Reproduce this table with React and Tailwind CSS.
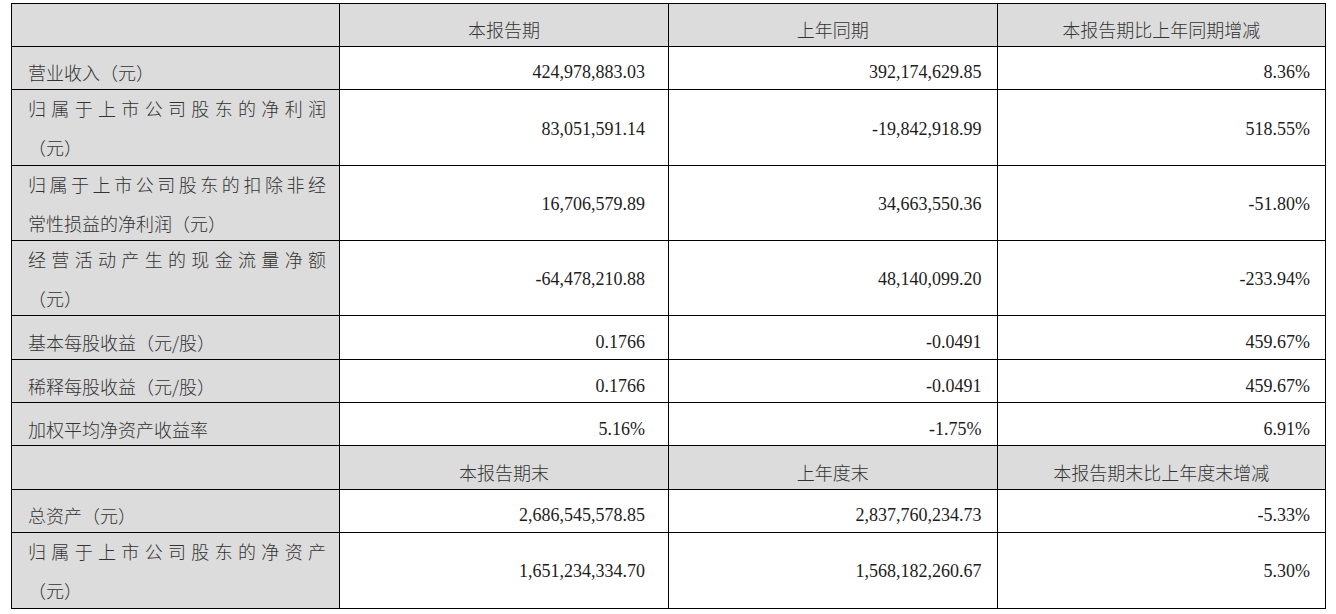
import React from "react";

const cjk = { fontFamily: '"Noto Sans CJK SC", "Liberation Sans", sans-serif' };
const num = { fontFamily: '"Liberation Serif", "Noto Sans CJK SC", serif' };

const rows = [
  { type: "head", h: "h-[42.6px]", cols: ["本报告期", "上年同期", "本报告期比上年同期增减"] },
  { type: "one", h: "h-[43.4px]", label: "营业收入（元）", v: ["424,978,883.03", "392,174,629.85", "8.36%"] },
  { type: "two", h: "h-[76.3px]", l1: "归属于上市公司股东的净利润", l2: "（元）", v: ["83,051,591.14", "-19,842,918.99", "518.55%"] },
  { type: "two", h: "h-[74.7px]", l1: "归属于上市公司股东的扣除非经", l2: "常性损益的净利润（元）", v: ["16,706,579.89", "34,663,550.36", "-51.80%"] },
  { type: "two", h: "h-[75.3px]", l1: "经营活动产生的现金流量净额", l2: "（元）", v: ["-64,478,210.88", "48,140,099.20", "-233.94%"] },
  { type: "one", h: "h-[44px]", label: "基本每股收益（元/股）", v: ["0.1766", "-0.0491", "459.67%"] },
  { type: "one", h: "h-[43px]", label: "稀释每股收益（元/股）", v: ["0.1766", "-0.0491", "459.67%"] },
  { type: "one", h: "h-[42.5px]", label: "加权平均净资产收益率", v: ["5.16%", "-1.75%", "6.91%"] },
  { type: "head", h: "h-[44px]", cols: ["本报告期末", "上年度末", "本报告期末比上年度末增减"] },
  { type: "one", h: "h-[43px]", label: "总资产（元）", v: ["2,686,545,578.85", "2,837,760,234.73", "-5.33%"] },
  { type: "two", h: "h-[75px]", l1: "归属于上市公司股东的净资产", l2: "（元）", v: ["1,651,234,334.70", "1,568,182,260.67", "5.30%"] },
];

const colW = ["w-[328px]", "w-[329px]", "w-[328.5px]", "flex-1"];
const padR = ["pr-[23px]", "pr-[15px]", "pr-[15px]"];

export default function App() {
  return (
    <div className="w-[1336px] h-[614px] bg-white overflow-hidden">
      <div className="ml-[11px] mt-[3px] w-[1315px] border border-black text-[18px] text-[#1c1c1c]">
        {rows.map((r, i) => {
          const last = i === rows.length - 1;
          const rowCls = `flex ${r.h} ${last ? "" : "border-b border-black"}`;
          if (r.type === "head") {
            return (
              <div key={i} className={rowCls}>
                <div className={`${colW[0]} shrink-0 border-r border-black bg-[#dcdcdc]`} />
                {r.cols.map((c, j) => (
                  <div
                    key={j}
                    className={`${colW[j + 1]} ${j < 2 ? "shrink-0 border-r border-black" : ""} bg-[#dcdcdc] flex items-center justify-center pt-[9px] font-light`}
                    style={cjk}
                  >
                    <span className="leading-[24px] text-[#333333]">{c}</span>
                  </div>
                ))}
              </div>
            );
          }
          const pt = r.type === "one" ? "pt-[9px]" : "pt-[2px]";
          return (
            <div key={i} className={rowCls}>
              <div
                className={`${colW[0]} shrink-0 border-r border-black bg-[#dcdcdc] flex flex-col justify-center pl-[16px] text-[#333333] font-light ${r.type === "one" ? "pt-[9px]" : "pt-[1px]"}`}
                style={cjk}
              >
                {r.type === "one" ? (
                  <span className="leading-[24px]">{r.label}</span>
                ) : (
                  <>
                    <span className="block w-[298px] leading-[39px] text-justify [text-align-last:justify] whitespace-nowrap">
                      {r.l1}
                    </span>
                    <span className="block leading-[39px]">{r.l2}</span>
                  </>
                )}
              </div>
              {r.v.map((v, j) => (
                <div
                  key={j}
                  className={`${colW[j + 1]} ${j < 2 ? "shrink-0 border-r border-black" : ""} flex items-center justify-end ${padR[j]} ${pt}`}
                  style={num}
                >
                  <span className="leading-[24px]">{v}</span>
                </div>
              ))}
            </div>
          );
        })}
      </div>
    </div>
  );
}
